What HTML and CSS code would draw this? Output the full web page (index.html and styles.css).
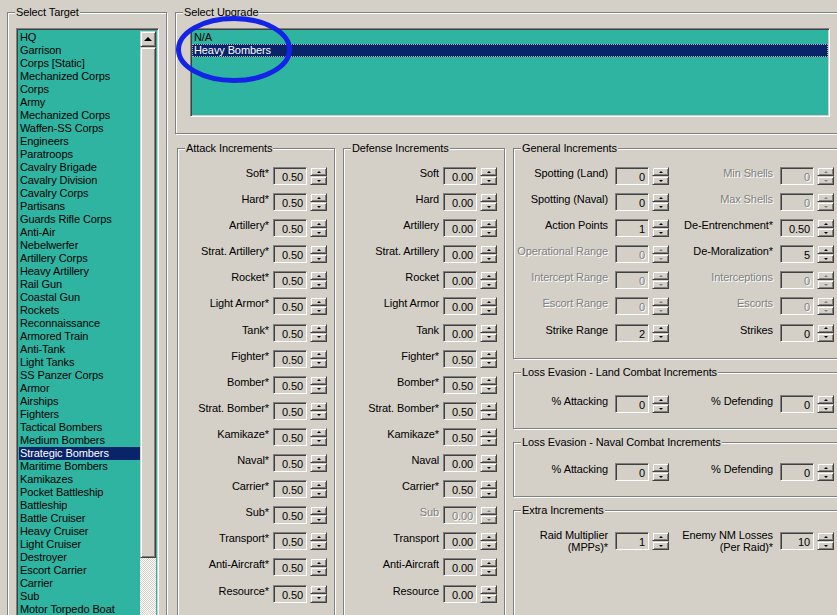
FILE: index.html
```html
<!DOCTYPE html>
<html lang="en">
<head>
    <meta charset="UTF-8">
    <title>Unit Upgrades</title>
    <link rel="stylesheet" href="styles.css">
</head>
<body>

<div class="window">

    <!-- left: unit type list -->
    <fieldset class="group target">
        <legend>Select Target</legend>
        <div class="listbox target-list">
            <ul class="items">
                <li>HQ</li>
                <li>Garrison</li>
                <li>Corps [Static]</li>
                <li>Mechanized Corps</li>
                <li>Corps</li>
                <li>Army</li>
                <li>Mechanized Corps</li>
                <li>Waffen-SS Corps</li>
                <li>Engineers</li>
                <li>Paratroops</li>
                <li>Cavalry Brigade</li>
                <li>Cavalry Division</li>
                <li>Cavalry Corps</li>
                <li>Partisans</li>
                <li>Guards Rifle Corps</li>
                <li>Anti-Air</li>
                <li>Nebelwerfer</li>
                <li>Artillery Corps</li>
                <li>Heavy Artillery</li>
                <li>Rail Gun</li>
                <li>Coastal Gun</li>
                <li>Rockets</li>
                <li>Reconnaissance</li>
                <li>Armored Train</li>
                <li>Anti-Tank</li>
                <li>Light Tanks</li>
                <li>SS Panzer Corps</li>
                <li>Armor</li>
                <li>Airships</li>
                <li>Fighters</li>
                <li>Tactical Bombers</li>
                <li>Medium Bombers</li>
                <li class="selected">Strategic Bombers</li>
                <li>Maritime Bombers</li>
                <li>Kamikazes</li>
                <li>Pocket Battleship</li>
                <li>Battleship</li>
                <li>Battle Cruiser</li>
                <li>Heavy Cruiser</li>
                <li>Light Cruiser</li>
                <li>Destroyer</li>
                <li>Escort Carrier</li>
                <li>Carrier</li>
                <li>Sub</li>
                <li>Motor Torpedo Boat</li>
            </ul>
            <div class="scrollbar">
                <div class="raised sb-btn"><span class="arrow-up"></span></div>
                <div class="raised sb-thumb"></div>
                <div class="sb-track"></div>
            </div>
        </div>
    </fieldset>

    <div class="main">
        <fieldset class="group upgrade">
            <legend>Select Upgrade</legend>
            <ul class="listbox items upgrade-list">
                <li>N/A</li>
                <li class="selected focus">Heavy Bombers</li>
            </ul>
        </fieldset>

        <div class="increments">
            <fieldset class="group column attack">
                <legend>Attack Increments</legend>
                <div class="row"><span class="lbl">Soft*</span><span class="edit">0.50</span><span class="spin"><span class="raised up"></span><span class="raised down"></span></span></div>
                <div class="row"><span class="lbl">Hard*</span><span class="edit">0.50</span><span class="spin"><span class="raised up"></span><span class="raised down"></span></span></div>
                <div class="row"><span class="lbl">Artillery*</span><span class="edit">0.50</span><span class="spin"><span class="raised up"></span><span class="raised down"></span></span></div>
                <div class="row"><span class="lbl">Strat. Artillery*</span><span class="edit">0.50</span><span class="spin"><span class="raised up"></span><span class="raised down"></span></span></div>
                <div class="row"><span class="lbl">Rocket*</span><span class="edit">0.50</span><span class="spin"><span class="raised up"></span><span class="raised down"></span></span></div>
                <div class="row"><span class="lbl">Light Armor*</span><span class="edit">0.50</span><span class="spin"><span class="raised up"></span><span class="raised down"></span></span></div>
                <div class="row"><span class="lbl">Tank*</span><span class="edit">0.50</span><span class="spin"><span class="raised up"></span><span class="raised down"></span></span></div>
                <div class="row"><span class="lbl">Fighter*</span><span class="edit">0.50</span><span class="spin"><span class="raised up"></span><span class="raised down"></span></span></div>
                <div class="row"><span class="lbl">Bomber*</span><span class="edit">0.50</span><span class="spin"><span class="raised up"></span><span class="raised down"></span></span></div>
                <div class="row"><span class="lbl">Strat. Bomber*</span><span class="edit">0.50</span><span class="spin"><span class="raised up"></span><span class="raised down"></span></span></div>
                <div class="row"><span class="lbl">Kamikaze*</span><span class="edit">0.50</span><span class="spin"><span class="raised up"></span><span class="raised down"></span></span></div>
                <div class="row"><span class="lbl">Naval*</span><span class="edit">0.50</span><span class="spin"><span class="raised up"></span><span class="raised down"></span></span></div>
                <div class="row"><span class="lbl">Carrier*</span><span class="edit">0.50</span><span class="spin"><span class="raised up"></span><span class="raised down"></span></span></div>
                <div class="row"><span class="lbl">Sub*</span><span class="edit">0.50</span><span class="spin"><span class="raised up"></span><span class="raised down"></span></span></div>
                <div class="row"><span class="lbl">Transport*</span><span class="edit">0.50</span><span class="spin"><span class="raised up"></span><span class="raised down"></span></span></div>
                <div class="row"><span class="lbl">Anti-Aircraft*</span><span class="edit">0.50</span><span class="spin"><span class="raised up"></span><span class="raised down"></span></span></div>
                <div class="row"><span class="lbl">Resource*</span><span class="edit">0.50</span><span class="spin"><span class="raised up"></span><span class="raised down"></span></span></div>
            </fieldset>

            <fieldset class="group column defense">
                <legend>Defense Increments</legend>
                <div class="row"><span class="lbl">Soft</span><span class="edit">0.00</span><span class="spin"><span class="raised up"></span><span class="raised down"></span></span></div>
                <div class="row"><span class="lbl">Hard</span><span class="edit">0.00</span><span class="spin"><span class="raised up"></span><span class="raised down"></span></span></div>
                <div class="row"><span class="lbl">Artillery</span><span class="edit">0.00</span><span class="spin"><span class="raised up"></span><span class="raised down"></span></span></div>
                <div class="row"><span class="lbl">Strat. Artillery</span><span class="edit">0.00</span><span class="spin"><span class="raised up"></span><span class="raised down"></span></span></div>
                <div class="row"><span class="lbl">Rocket</span><span class="edit">0.00</span><span class="spin"><span class="raised up"></span><span class="raised down"></span></span></div>
                <div class="row"><span class="lbl">Light Armor</span><span class="edit">0.00</span><span class="spin"><span class="raised up"></span><span class="raised down"></span></span></div>
                <div class="row"><span class="lbl">Tank</span><span class="edit">0.00</span><span class="spin"><span class="raised up"></span><span class="raised down"></span></span></div>
                <div class="row"><span class="lbl">Fighter*</span><span class="edit">0.50</span><span class="spin"><span class="raised up"></span><span class="raised down"></span></span></div>
                <div class="row"><span class="lbl">Bomber*</span><span class="edit">0.50</span><span class="spin"><span class="raised up"></span><span class="raised down"></span></span></div>
                <div class="row"><span class="lbl">Strat. Bomber*</span><span class="edit">0.50</span><span class="spin"><span class="raised up"></span><span class="raised down"></span></span></div>
                <div class="row"><span class="lbl">Kamikaze*</span><span class="edit">0.50</span><span class="spin"><span class="raised up"></span><span class="raised down"></span></span></div>
                <div class="row"><span class="lbl">Naval</span><span class="edit">0.00</span><span class="spin"><span class="raised up"></span><span class="raised down"></span></span></div>
                <div class="row"><span class="lbl">Carrier*</span><span class="edit">0.50</span><span class="spin"><span class="raised up"></span><span class="raised down"></span></span></div>
                <div class="row off"><span class="lbl">Sub</span><span class="edit">0.00</span><span class="spin"><span class="raised up"></span><span class="raised down"></span></span></div>
                <div class="row"><span class="lbl">Transport</span><span class="edit">0.00</span><span class="spin"><span class="raised up"></span><span class="raised down"></span></span></div>
                <div class="row"><span class="lbl">Anti-Aircraft</span><span class="edit">0.00</span><span class="spin"><span class="raised up"></span><span class="raised down"></span></span></div>
                <div class="row"><span class="lbl">Resource</span><span class="edit">0.00</span><span class="spin"><span class="raised up"></span><span class="raised down"></span></span></div>
            </fieldset>

            <div class="side">
                <fieldset class="group pairs general">
                    <legend>General Increments</legend>
                    <div class="row"><span class="lbl">Spotting (Land)</span><span class="edit">0</span><span class="spin"><span class="raised up"></span><span class="raised down"></span></span></div>
                    <div class="row off"><span class="lbl">Min Shells</span><span class="edit">0</span><span class="spin"><span class="raised up"></span><span class="raised down"></span></span></div>
                    <div class="row"><span class="lbl">Spotting (Naval)</span><span class="edit">0</span><span class="spin"><span class="raised up"></span><span class="raised down"></span></span></div>
                    <div class="row off"><span class="lbl">Max Shells</span><span class="edit">0</span><span class="spin"><span class="raised up"></span><span class="raised down"></span></span></div>
                    <div class="row"><span class="lbl">Action Points</span><span class="edit">1</span><span class="spin"><span class="raised up"></span><span class="raised down"></span></span></div>
                    <div class="row"><span class="lbl">De-Entrenchment*</span><span class="edit">0.50</span><span class="spin"><span class="raised up"></span><span class="raised down"></span></span></div>
                    <div class="row off"><span class="lbl">Operational Range</span><span class="edit">0</span><span class="spin"><span class="raised up"></span><span class="raised down"></span></span></div>
                    <div class="row"><span class="lbl">De-Moralization*</span><span class="edit">5</span><span class="spin"><span class="raised up"></span><span class="raised down"></span></span></div>
                    <div class="row off"><span class="lbl">Intercept Range</span><span class="edit">0</span><span class="spin"><span class="raised up"></span><span class="raised down"></span></span></div>
                    <div class="row off"><span class="lbl">Interceptions</span><span class="edit">0</span><span class="spin"><span class="raised up"></span><span class="raised down"></span></span></div>
                    <div class="row off"><span class="lbl">Escort Range</span><span class="edit">0</span><span class="spin"><span class="raised up"></span><span class="raised down"></span></span></div>
                    <div class="row off"><span class="lbl">Escorts</span><span class="edit">0</span><span class="spin"><span class="raised up"></span><span class="raised down"></span></span></div>
                    <div class="row"><span class="lbl">Strike Range</span><span class="edit">2</span><span class="spin"><span class="raised up"></span><span class="raised down"></span></span></div>
                    <div class="row"><span class="lbl">Strikes</span><span class="edit">0</span><span class="spin"><span class="raised up"></span><span class="raised down"></span></span></div>
                </fieldset>

                <fieldset class="group pairs land">
                    <legend>Loss Evasion - Land Combat Increments</legend>
                    <div class="row"><span class="lbl">% Attacking</span><span class="edit">0</span><span class="spin"><span class="raised up"></span><span class="raised down"></span></span></div>
                    <div class="row"><span class="lbl">% Defending</span><span class="edit">0</span><span class="spin"><span class="raised up"></span><span class="raised down"></span></span></div>
                </fieldset>

                <fieldset class="group pairs naval">
                    <legend>Loss Evasion - Naval Combat Increments</legend>
                    <div class="row"><span class="lbl">% Attacking</span><span class="edit">0</span><span class="spin"><span class="raised up"></span><span class="raised down"></span></span></div>
                    <div class="row"><span class="lbl">% Defending</span><span class="edit">0</span><span class="spin"><span class="raised up"></span><span class="raised down"></span></span></div>
                </fieldset>

                <fieldset class="group pairs extra">
                    <legend>Extra Increments</legend>
                    <div class="row"><span class="lbl">Raid Multiplier<br>(MPPs)*</span><span class="edit">1</span><span class="spin"><span class="raised up"></span><span class="raised down"></span></span></div>
                    <div class="row"><span class="lbl">Enemy NM Losses<br>(Per Raid)*</span><span class="edit">10</span><span class="spin"><span class="raised up"></span><span class="raised down"></span></span></div>
                </fieldset>
            </div>
        </div>
    </div>

    <!-- hand-drawn highlight around the upgrade entry -->
    <svg class="mark" width="116" height="67" viewBox="0 0 116 67">
        <ellipse cx="58" cy="33.5" rx="55.5" ry="31" fill="none" stroke="#1424e6" stroke-width="5"/>
    </svg>

</div>

</body>
</html>
```

FILE: styles.css
```css
/* classic win32 dialog look */
* {
    box-sizing: border-box;
}

body {
    margin: 0;
    background: #d4d0c8;
    color: #000;
    font-family: "Liberation Sans", Arial, sans-serif;
    font-size: 11px;
    letter-spacing: -0.1px;
}

.window {
    position: relative;
    display: flex;
    align-items: flex-start;
    width: 837px;
    height: 615px;
    overflow: hidden;
}

/* group boxes */
.group {
    margin: 6px 0 0;
    padding: 0;
    min-width: 0;
    border: 1px solid #808080;
    box-shadow: inset 1px 1px 0 #fff, 1px 1px 0 #fff;
}

.group legend {
    margin-left: 7px;
    padding: 0 1px;
    line-height: 13px;
    background: #d4d0c8;
}

/* sunken list boxes */
.listbox {
    border: 1px solid;
    border-color: #808080 #fff #fff #808080;
    box-shadow: inset 1px 1px 0 #404040, inset -1px -1px 0 #d4d0c8;
    background: #2fb4a1;
    padding: 2px;
}

.items {
    list-style: none;
    margin: 0;
}

.items li {
    height: 13px;
    line-height: 13px;
    padding-left: 1px;
    white-space: nowrap;
}

.items li.selected {
    background: #0a246a;
    color: #fff;
}

.target {
    flex: none;
    width: 160px;
    height: 640px;
    margin-left: 7px;
}

.target-list {
    display: flex;
    width: 143px;
    height: 600px;
    margin: 9px 0 0 8px;
}

.target-list .items {
    flex: 1;
    padding: 0;
}

.scrollbar {
    display: flex;
    flex-direction: column;
    width: 16px;
}

.raised {
    border: 1px solid;
    border-color: #d4d0c8 #404040 #404040 #d4d0c8;
    box-shadow: inset 1px 1px 0 #fff, inset -1px -1px 0 #808080;
    background: #d4d0c8;
}

.sb-btn {
    height: 16px;
    display: flex;
    align-items: center;
    justify-content: center;
}

.arrow-up {
    width: 0;
    height: 0;
    border-left: 4px solid transparent;
    border-right: 4px solid transparent;
    border-bottom: 4px solid #000;
    margin-top: -1px;
}

.sb-thumb {
    height: 511px;
}

.sb-track {
    flex: 1;
    background: repeating-conic-gradient(#fff 0 25%, #d4d0c8 0 50%) 0 0 / 2px 2px;
}

.main {
    flex: none;
    width: 670px;
    margin-left: 8px;
}

.upgrade {
    height: 128px;
}

.upgrade-list {
    width: 640px;
    height: 89px;
    margin: 9px 0 0 14px;
    padding: 2px 1px;
}

.upgrade-list li {
    padding-left: 2px;
}

.upgrade-list li.focus {
    outline: 1px dotted #b8b8b8;
    outline-offset: -1px;
}

/* increment panels */
.increments {
    display: flex;
    align-items: flex-start;
    margin-top: 2px;
}

.column {
    height: 480px;
    padding: 12px 7px 0 0;
}

.attack {
    width: 158px;
    margin-left: 2px;
}

.defense {
    width: 162px;
    margin-left: 8px;
}

.row {
    display: flex;
    align-items: flex-start;
    height: 26.1px;
}

.lbl {
    flex: 1;
    margin: 0 4px 0 0;
    text-align: right;
    line-height: 13px;
    white-space: nowrap;
}

.edit {
    width: 34px;
    height: 18px;
    padding: 2px 3px 0 0;
    border: 1px solid;
    border-color: #808080 #fff #fff #808080;
    box-shadow: inset 1px 1px 0 #404040, inset -1px -1px 0 #d4d0c8;
    text-align: right;
    line-height: 14px;
}

.spin {
    display: flex;
    flex-direction: column;
    width: 17px;
    height: 18px;
    margin-left: 3px;
}

.spin .raised {
    flex: 1;
    display: flex;
    align-items: center;
    justify-content: center;
}

.spin .up::after,
.spin .down::after {
    content: "";
    width: 0;
    height: 0;
    border-left: 2px solid transparent;
    border-right: 2px solid transparent;
}

.spin .up::after {
    border-bottom: 2px solid #000;
}

.spin .down::after {
    border-top: 2px solid #000;
}

.row.off .lbl,
.row.off .edit {
    color: #808080;
    text-shadow: 1px 1px 0 #fff;
}

.row.off .spin .up::after {
    border-bottom-color: #808080;
}

.row.off .spin .down::after {
    border-top-color: #808080;
}

/* right hand stack */
.side {
    flex: none;
    width: 330px;
    margin-left: 8px;
}

.pairs {
    display: grid;
    grid-template-columns: 155px 165px;
    align-content: start;
    padding-top: 12px;
}

.pairs .lbl {
    margin-right: 7px;
}

.general {
    height: 217px;
}

.land {
    height: 63px;
    margin-top: 7px;
    padding-top: 16px;
}

.naval {
    height: 61px;
    margin-top: 7px;
    padding-top: 14px;
}

.extra {
    height: 140px;
    margin-top: 7px;
    padding-top: 15px;
}

.extra .lbl {
    margin-top: -3px;
    line-height: 12px;
}

/* annotation ring */
.mark {
    position: absolute;
    left: 176px;
    top: 16px;
}
```
